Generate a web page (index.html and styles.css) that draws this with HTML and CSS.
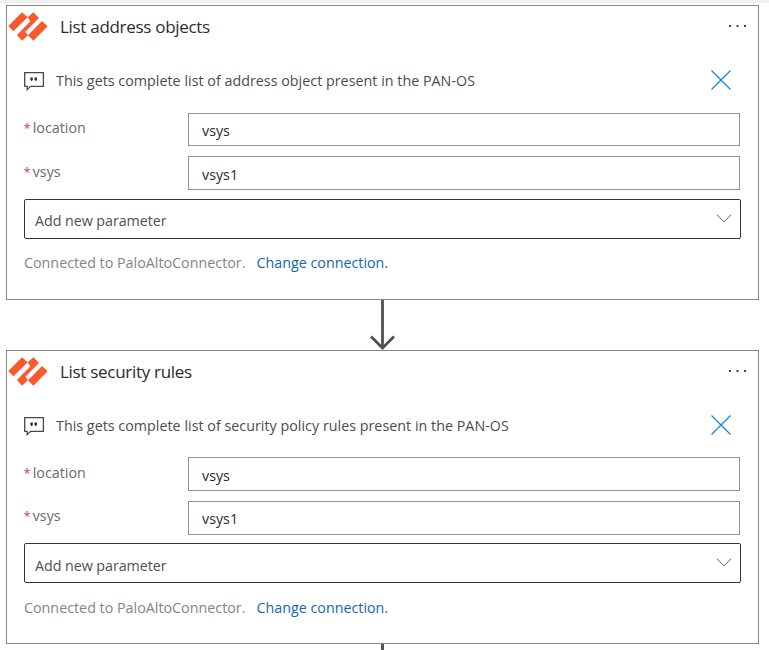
FILE: index.html
```
<!DOCTYPE html>
<html lang="en">
<head>
<meta charset="utf-8">
<title>Logic app designer</title>
<link rel="stylesheet" href="styles.css">
</head>
<body>
<svg class="defs" width="0" height="0">
  <symbol id="logo" viewBox="24 35 120 87"><path fill="#fa582d" d="M66 36 83 51 40 93 25 77ZM100 36 117 53 76 94 84 105 66 121 51 104 91 63 83 51ZM126 62 143 78 100 121 84 105Z"/></symbol>
  <symbol id="note" viewBox="0 0 21 19"><path fill="none" stroke="#484848" stroke-width="1.3" d="M.7.7H19.4V14.4H6.6L3.2 17.6V14.4H.7Z"/><path fill="#333" d="M6.3 5.5h2.5v2.4l-1 1h-1l.4-1h-.9zM10.5 5.5H13v2.4l-1 1h-1l.4-1h-.9z"/></symbol>
  <symbol id="close" viewBox="0 0 20 20"><path fill="none" stroke="#1683d8" stroke-width="1.15" d="M.5.5 19.5 19.5M19.5.5.5 19.5"/></symbol>
  <symbol id="chevron" viewBox="0 0 16 9"><path fill="none" stroke="#555" d="M1 .8 8 7.8 15 .8"/></symbol>
  <symbol id="dots" viewBox="0 0 20 4"><path fill="#444" d="M1 1h2v2H1zM8.5 1h2v2h-2zM16 1h2v2h-2z"/></symbol>
</svg>
<div class="topbar"></div>
<main class="flow">
  <section class="card first">
    <header class="head"><svg class="logo"><use href="#logo"/></svg><h2 class="title">List address objects</h2><svg class="dots"><use href="#dots"/></svg></header>
    <div class="comment"><svg class="note"><use href="#note"/></svg><p class="desc">This gets complete list of address object present in the PAN-OS</p><svg class="close"><use href="#close"/></svg></div>
    <div class="row"><label class="label"><span class="req">*</span>location</label><div class="field short">vsys</div></div>
    <div class="row low"><label class="label"><span class="req">*</span>vsys</label><div class="field">vsys1</div></div>
    <div class="select"><span>Add new parameter</span><svg class="chevron"><use href="#chevron"/></svg></div>
    <footer class="foot"><span class="connected">Connected to PaloAltoConnector.</span><a class="link">Change connection.</a></footer>
  </section>
  <svg class="arrow" viewBox="0 0 28 50"><path fill="none" stroke="#505050" stroke-width="2.8" d="M14.5 0V47M3 36.5 14.5 48 26 36.5"/></svg>
  <section class="card second">
    <header class="head"><svg class="logo"><use href="#logo"/></svg><h2 class="title">List security rules</h2><svg class="dots"><use href="#dots"/></svg></header>
    <div class="comment"><svg class="note"><use href="#note"/></svg><p class="desc">This gets complete list of security policy rules present in the PAN-OS</p><svg class="close"><use href="#close"/></svg></div>
    <div class="row low"><label class="label"><span class="req">*</span>location</label><div class="field">vsys</div></div>
    <div class="row"><label class="label"><span class="req">*</span>vsys</label><div class="field">vsys1</div></div>
    <div class="select"><span>Add new parameter</span><svg class="chevron"><use href="#chevron"/></svg></div>
    <footer class="foot"><span class="connected">Connected to PaloAltoConnector.</span><a class="link">Change connection.</a></footer>
  </section>
  <div class="stem"></div>
</main>
</body>
</html>
```
FILE: styles.css
```
* { box-sizing: border-box; }
body { margin: 0; background: #fff; font-family: "Open Sans", "Noto Sans", sans-serif; font-size: 14.3px; color: #333; height: 650px; overflow: hidden; }
svg { display: block; flex: none; }
.defs { position: absolute; }
.topbar { height: 3px; background: #f0f0f0; }
.flow { display: flex; flex-direction: column; padding: 2px 10px 0 6px; }
.card { width: 753px; border: 1px solid #8a8688; background: #fff; }
.first { height: 295px; }
.second { height: 294px; }
.head { display: flex; align-items: center; height: 42px; padding: 0 10px 0 1px; }
.logo { width: 40px; height: 29px; margin-top: -2px; }
.title { margin: 0 auto 0 12px; font-size: 17px; font-weight: 400; line-height: 24px; color: #2c2c2c; letter-spacing: -0.3px; }
.dots { width: 20px; height: 4px; margin-top: -2px; }
.comment { display: flex; align-items: center; height: 65px; padding: 0 27px 0 17px; }
.note { width: 21px; height: 19px; margin-top: 2px; }
.desc { margin: 0 auto 0 11px; color: #4c4c4c; letter-spacing: 0.015px; }
.close { width: 20px; height: 20px; margin-top: -1px; }
.row { display: flex; padding: 0 18px 0 17px; margin-bottom: 10px; }
.second .comment { height: 64px; }
.label { width: 164px; color: #6c6c6c; line-height: 30px; }
.req { color: #e83545; font-size: 13px; margin-right: 2px; margin-left: -0.5px; }
.field { width: 552px; height: 34px; padding-left: 13px; border: 1px solid #949494; line-height: 34px; color: #2c2c2c; }
.short { height: 33px; }
.low .label { line-height: 32px; }
.low .field { line-height: 36px; }
.select { display: flex; align-items: center; justify-content: space-between; width: 717px; height: 40px; margin: -1px 0 0 17px; padding: 0 8px 0 10px; border: 1px solid #333; border-radius: 2px; color: #505050; letter-spacing: -0.06px; }
.select span { padding-top: 3px; }
.second .select { margin-top: -2px; }
.second .select span { padding-top: 5px; }
.chevron { width: 16px; height: 9px; margin-top: -1px; }
.foot { display: flex; gap: 11px; padding: 14px 17px; line-height: 20px; color: #848484; }
.second .foot { padding-top: 15px; }
.link { color: #1766b4; }
.arrow { width: 28px; height: 50px; margin-left: 362px; }
.stem { width: 3px; height: 6px; margin-left: 375px; background: #555; }
```
